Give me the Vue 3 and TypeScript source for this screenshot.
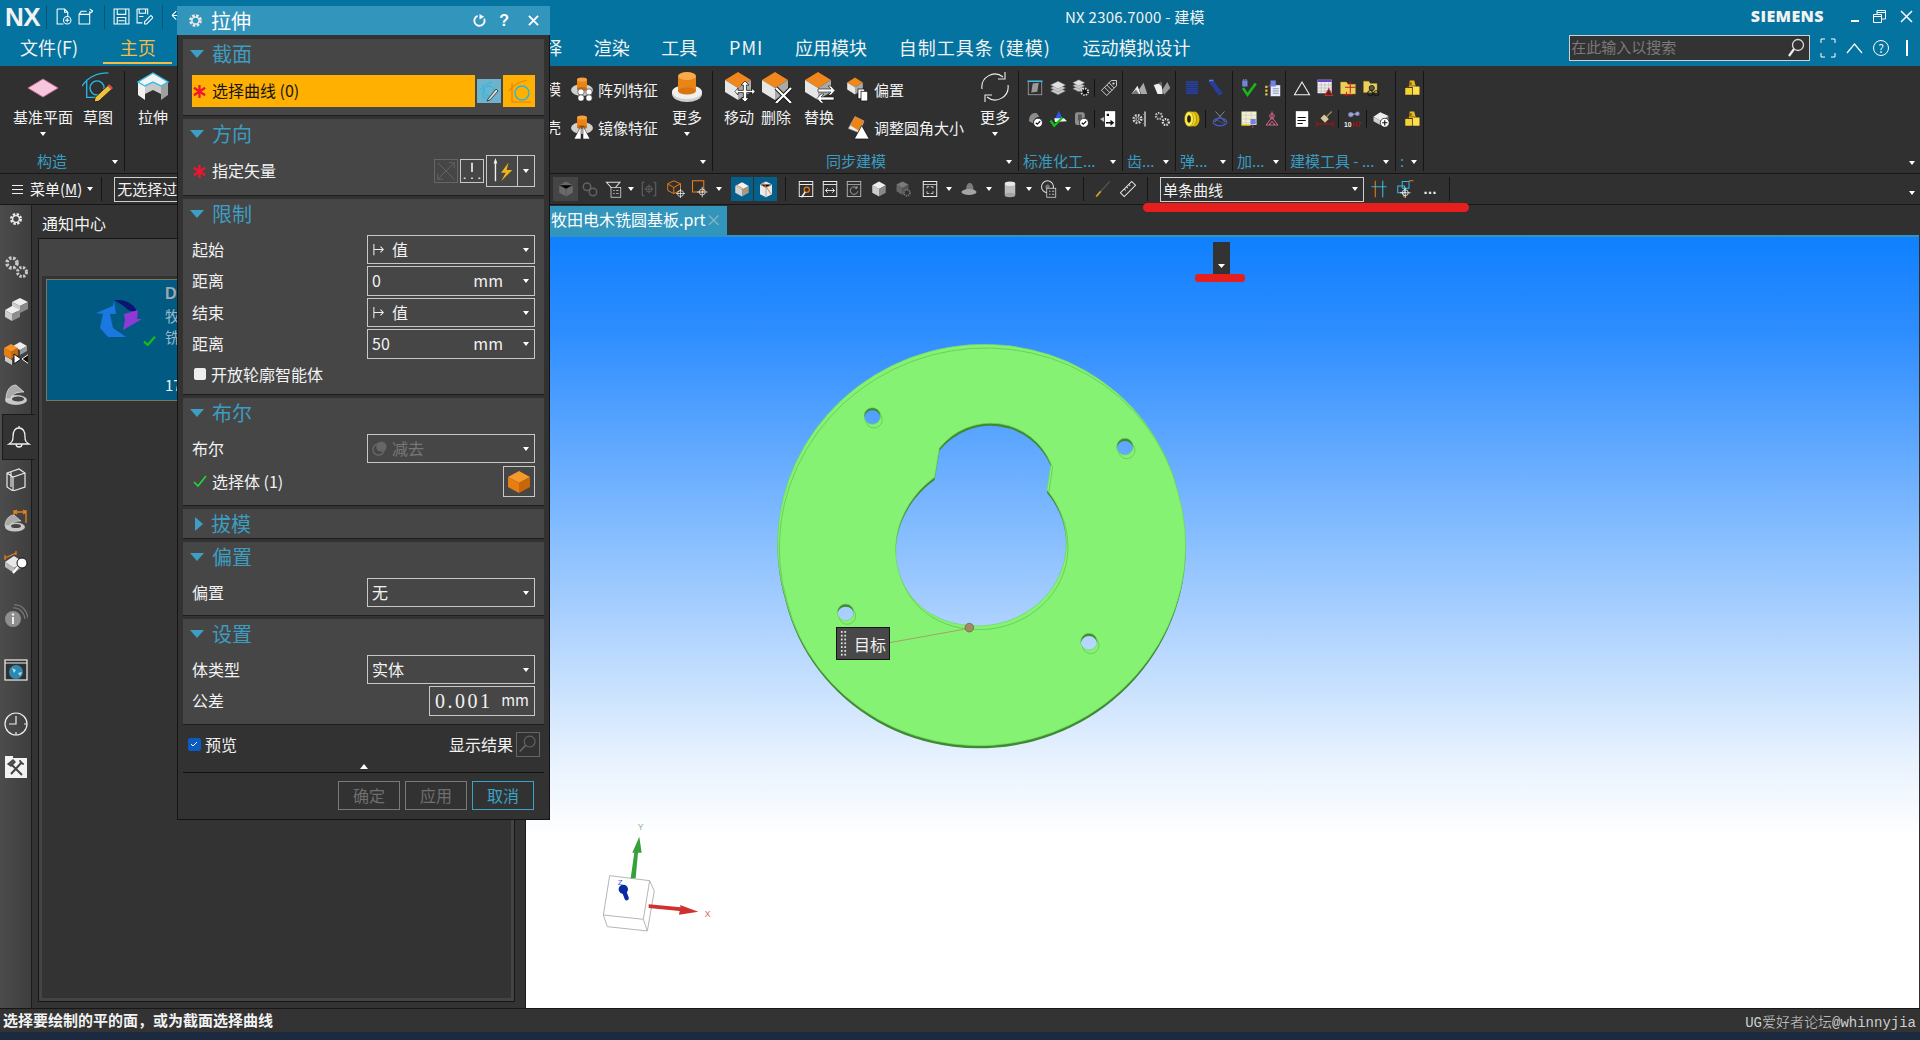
<script setup lang="ts">
type Cell = { i?: string; w: number; hi?: boolean; hg?: boolean; dd?: boolean; sep?: boolean }

const tabs = ['选择', '渲染', '工具', 'PMI', '应用模块']

const smallGroups = [
  { label: '标准化工...', width: 104, rows: [['lasso', 'layers', 'layersgear', '|', 'tag'], ['shellok', 'greenok', 'cylok', '|', 'docarrow']] },
  { label: '齿...', width: 53, rows: [['shards', 'shards2'], ['gearbar', 'gears']] },
  { label: '弹...', width: 57, rows: [['spring', 'spring2'], ['coil', '|', 'scissors']] },
  { label: '加...', width: 53, rows: [['plugok', 'plugdoc'], ['note', 'pinktriad']] },
  { label: '建模工具 - ...', width: 110, rows: [['tri', 'table', 'foldercross', 'folderlink'], ['doc', 'brush', '|', 'h7', '|', 'blockplus']] },
  { label: ':', width: 28, rows: [['gold'], ['gold']] },
]

const toolbar: Cell[] = [
  { i: 'greyblock', w: 25, hg: true }, { i: 'chain', w: 24 }, { i: 'funnel', w: 24 }, { dd: true, w: 10 },
  { i: 'bracket', w: 26 }, { i: 'wirecube', w: 28 }, { i: 'orangesq', w: 20 }, { dd: true, w: 18 },
  { w: 3 }, { i: 'viewcube', w: 22, hi: true }, { w: 1 }, { i: 'viewcube2', w: 23, hi: true }, { w: 8 }, { sep: true, w: 1 },
  { w: 8 }, { i: 'winpin', w: 24 }, { i: 'winarrows', w: 24 }, { i: 'winrefresh', w: 24 }, { i: 'graycube', w: 26 },
  { i: 'gearcube', w: 24 }, { i: 'winexpand', w: 27 }, { dd: true, w: 12 }, { i: 'hat', w: 28 }, { dd: true, w: 12 },
  { i: 'cylgray', w: 30 }, { dd: true, w: 8 }, { i: 'bulbdoc', w: 32 }, { dd: true, w: 6 }, { w: 12 }, { sep: true, w: 1 },
  { w: 7 }, { i: 'pen', w: 24 }, { i: 'ruler', w: 26 }, { w: 6 }, { sep: true, w: 1 }, { w: 12 },
]

const rail = [
  { i: 'railgear', cls: 'h1' }, { i: 'railgears', cls: 'h2' }, { i: 'blocks', cls: 'h2' }, { i: 'orangeblocks', cls: 'h2' },
  { i: 'shell', cls: 'h2' }, { i: 'bell', cls: 'h2 on' }, { i: 'box', cls: 'h2' }, { i: 'shellmark', cls: 'h2' },
  { i: 'blockmag', cls: 'h2' }, { i: 'info', cls: 'h3' }, { i: 'globewin', cls: 'h3' }, { i: 'clock', cls: 'h3' }, { i: 'tools', cls: 'h2' },
]

const circle = (x: number, y: number, r: number) => `M${x - r} ${y}a${r} ${r} 0 1 0 ${2 * r} 0a${r} ${r} 0 1 0 ${-2 * r} 0Z`
const holes: [number, number][] = [[340, 258], [1098, 350], [260, 847], [990, 935]]
const disc =
  'M79 803A610 587 -15 1 1 1257 487A610 587 -15 1 1 79 803Z' +
  'M541 355A195 195 0 0 1 876 402L864 480C905 530 922 585 922 640C922 780 800 888 655 888C510 888 410 790 410 660C410 570 460 490 527 442Z' +
  holes.map(h => circle(h[0], h[1], 25)).join('')
</script>

<template>
  <div class="app">
    <svg class="defs" width="0" height="0">
      <defs>
        <g id="cubeg"><polygon points="15,1 28,9 15,17 2,9" fill="#f0871c" /><polygon points="2,9 15,17 15,29 2,21" fill="#e6e6e6" /><polygon points="28,9 15,17 15,29 28,21" fill="#a9a9a9" /></g>
        <g id="cylg"><ellipse cx="12" cy="13" rx="11" ry="6" fill="#d0d0d0" /><rect x="7" y="2" width="10" height="10" fill="#ea8416" /><ellipse cx="12" cy="12" rx="5" ry="2" fill="#c86c0c" /><ellipse cx="12" cy="2.5" rx="5" ry="2" fill="#f7a13c" /></g>
        <symbol id="plane" viewBox="0 0 32 20"><polygon points="16,1 31,10 16,19 1,10" fill="#f5c6dd" stroke="#c86f98" /></symbol>
        <symbol id="sketch" viewBox="0 0 34 32"><path d="M0 15C6 6 16 1 28 1M5 8V27H17" fill="none" stroke="#25b9e6" stroke-width="1.4" /><circle cx="16" cy="17" r="7.5" fill="none" stroke="#25b9e6" stroke-width="1.5" /><polygon points="29,13 33,17 18,31 13,32 14,27" fill="#eec23c" stroke="#111" stroke-width=".8" /><polygon points="29,13 33,17 31,19 27,15" fill="#d94b4b" /></symbol>
        <symbol id="extrude" viewBox="0 0 32 30"><polygon points="1,10 8,14 8,28 1,23" fill="#f2f2f2" /><polygon points="24,14 31,10 31,23 24,28" fill="#9f9f9f" /><polygon points="8,14 16,10 24,14 24,22 16,18 8,22" fill="#c9c9c9" /><polygon points="16,1 31,10 24,14 16,10 8,14 1,10" fill="#f4f4f4" stroke="#35c0e8" stroke-width="1.4" /></symbol>
        <symbol id="arrayf" viewBox="0 0 24 24"><use href="#cylg" /><g fill="#fff" stroke="#222" stroke-width=".6"><circle cx="11" cy="15" r="3.2" /><circle cx="19" cy="15" r="3.2" /><circle cx="11" cy="21" r="3.2" /><circle cx="19" cy="21" r="3.2" /></g></symbol>
        <symbol id="mirrorf" viewBox="0 0 24 24"><use href="#cylg" /><polygon points="11,11 11,24 4,24" fill="#fff" stroke="#111" stroke-width=".5" /><polygon points="13,11 13,24 20,24" fill="#fff" stroke="#111" stroke-width=".5" /></symbol>
        <symbol id="cylbig" viewBox="0 0 32 32"><ellipse cx="16" cy="23" rx="15" ry="8" fill="#cfcfcf" /><ellipse cx="16" cy="21" rx="15" ry="7" fill="#f0f0f0" /><rect x="7" y="5" width="18" height="15" fill="#ea8416" /><ellipse cx="16" cy="20" rx="9" ry="3.5" fill="#d77510" /><ellipse cx="16" cy="5" rx="9" ry="4" fill="#f8aa48" /></symbol>
        <symbol id="move" viewBox="0 0 32 32"><use href="#cubeg" /><path d="M23 12l4 4h-2.600v5.400H30V19l3 3.500-3 3.500v-2.400h-5.400V29H27l-4 4-4-4h2.400v-5.400H16V26l-3-3.500 3-3.500v2.400h5.400V16H19z" fill="#fff" stroke="#111" stroke-width=".7" transform="translate(-1 -2)" /></symbol>
        <symbol id="del" viewBox="0 0 32 32"><use href="#cubeg" /><path d="M16 17L31 32M31 17L16 32" stroke="#111" stroke-width="4" /><path d="M16 17L31 32M31 17L16 32" stroke="#fff" stroke-width="2.200" /></symbol>
        <symbol id="replace" viewBox="0 0 32 32"><use href="#cubeg" /><path d="M15 18H28l-3-3h3l4 4.500-4 4.500h-3l3-3H15ZM31 26H18l3-3h-3l-4 4.500 4 4.500h3l-3-3H31Z" fill="#fff" stroke="#111" stroke-width=".6" /></symbol>
        <symbol id="offset" viewBox="0 0 32 32"><g transform="scale(.8)"><use href="#cubeg" /></g><rect x="16" y="16" width="9" height="13" fill="#fff" stroke="#111" /><rect x="20" y="19" width="9" height="13" fill="#fff" stroke="#111" /></symbol>
        <symbol id="resize" viewBox="0 0 32 32"><polygon points="12,2 24,8 18,24 3,18" fill="#eee" stroke="#888" /><polygon points="12,2 24,8 17,21 6,14" fill="#ed8418" /><polygon points="21,14 31,32 11,32" fill="#fff" stroke="#111" /></symbol>
        <symbol id="refresh" viewBox="0 0 32 32"><path d="M3 18A13 13 0 0 1 24 6M29 14A13 13 0 0 1 8 26" fill="none" stroke="#eee" stroke-width="1.100" /><path d="M26 1V8H19M6 31V24H13" fill="none" stroke="#eee" stroke-width="1.100" /></symbol>

        <symbol id="lasso" viewBox="0 0 24 24"><rect x="3" y="3" width="18" height="18" fill="none" stroke="#aaa" /><path d="M2 3H22" stroke="#35c0e8" stroke-width="2" /><polygon points="9,6 17,5 15,17 7,18" fill="#9a9a9a" /></symbol>
        <symbol id="layers" viewBox="0 0 24 24"><g fill="#c9c9c9" stroke="#777" stroke-width=".5"><polygon points="12,11 22,16 12,21 2,16" /><polygon points="12,7 22,12 12,17 2,12" /><polygon points="12,3 22,8 12,13 2,8" fill="#e0e0e0" /></g></symbol>
        <symbol id="layersgear" viewBox="0 0 24 24"><g fill="#c9c9c9" stroke="#777" stroke-width=".5"><polygon points="9,9 17,13 9,17 1,13" /><polygon points="9,5 17,9 9,13 1,9" /><polygon points="9,1 17,5 9,9 1,5" fill="#e0e0e0" /></g><circle cx="17" cy="17" r="4.500" fill="#111" stroke="#ddd" stroke-width="2.500" stroke-dasharray="2 1.500" /></symbol>
        <symbol id="tag" viewBox="0 0 24 24"><path d="M15 2H22V9L9 22 2 15ZM12 5L19 12M9 8L16 15M6 11L13 18" fill="none" stroke="#eee" stroke-width="1.100" /><circle cx="18" cy="6" r="1.400" fill="#eee" /></symbol>
        <symbol id="shellok" viewBox="0 0 24 24"><path d="M4 15C4 7 8 3 14 4L18 9 C12 10 9 13 10 18Z" fill="#8d8d8d" /><circle cx="16" cy="17" r="6" fill="#fff" stroke="#111" /><path d="M13 17l2 2 4-4" fill="none" stroke="#111" stroke-width="1.500" /></symbol>
        <symbol id="greenok" viewBox="0 0 24 24"><polygon points="13,1 18,11 8,12" fill="#2d55e6" /><polygon points="7,11 20,11 24,15 8,16" fill="#f2f2f2" /><path d="M2 14l5 7L18 10" fill="none" stroke="#14c014" stroke-width="3" /></symbol>
        <symbol id="cylok" viewBox="0 0 24 24"><rect x="4" y="3" width="13" height="17" rx="3" fill="#8d8d8d" /><rect x="8" y="6" width="5" height="8" fill="#555" /><circle cx="16" cy="17" r="6" fill="#fff" stroke="#111" /><path d="M13 17l2 2 4-4" fill="none" stroke="#111" stroke-width="1.500" /></symbol>
        <symbol id="docarrow" viewBox="0 0 24 24"><path d="M0 12L8 8V18Z" fill="#bbb" /><rect x="6" y="1" width="15" height="22" fill="#fff" stroke="#111" /><path d="M9 5h3v3h-3zM15 5h3M8 16H14V13l5 4-5 4V18H8Z" fill="#111" /></symbol>
        <symbol id="shards" viewBox="0 0 24 24"><polygon points="2,20 10,9 14,20" fill="#eee" /><polygon points="12,14 18,5 23,20 15,20" fill="#aaa" /><polygon points="2,20 8,14 12,20" fill="#777" /></symbol>
        <symbol id="shards2" viewBox="0 0 24 24"><polygon points="1,8 11,5 13,20 6,20" fill="#f0f0f0" /><polygon points="12,15 19,4 23,12 15,21" fill="#999" /><polygon points="7,6 11,3 12,10" fill="#666" /></symbol>
        <symbol id="gearbar" viewBox="0 0 24 24"><circle cx="10" cy="12" r="5" fill="none" stroke="#ccc" stroke-width="3.500" stroke-dasharray="2.300 1.600" /><circle cx="10" cy="12" r="2" fill="none" stroke="#ddd" /><path d="M20 2V22" stroke="#ccc" stroke-width="2" /><path d="M17 6h3M17 12h3M17 18h3" stroke="#888" /></symbol>
        <symbol id="gears" viewBox="0 0 24 24"><circle cx="8" cy="8" r="4" fill="none" stroke="#bbb" stroke-width="3" stroke-dasharray="2 1.400" /><circle cx="17" cy="16" r="4" fill="none" stroke="#ddd" stroke-width="3" stroke-dasharray="2 1.400" /></symbol>
        <symbol id="spring" viewBox="0 0 24 24"><g stroke="#2e49ad" stroke-width="2"><path d="M4 4h16M4 7h16M4 10h16M4 13h16M4 16h16M4 19h16" /></g><rect x="4" y="3" width="16" height="18" fill="#1e318a" opacity=".35" /></symbol>
        <symbol id="spring2" viewBox="0 0 24 24"><path d="M6 2l14 19" stroke="#2742b8" stroke-width="6" stroke-dasharray="2 .6" /><path d="M4 2h6" stroke="#5a78ee" stroke-width="2" /></symbol>
        <symbol id="coil" viewBox="0 0 24 24"><ellipse cx="15" cy="12" rx="7" ry="10" fill="#d9b500" /><ellipse cx="11" cy="12" rx="7" ry="10" fill="#f1d61f" stroke="#6e5b00" stroke-width=".6" /><ellipse cx="8" cy="12" rx="6" ry="10" fill="#ffe94a" stroke="#6e5b00" stroke-width=".6" /><ellipse cx="8" cy="12" rx="2.500" ry="5" fill="#222" /></symbol>
        <symbol id="scissors" viewBox="0 0 24 24"><path d="M6 2l13 14M18 2L5 16" stroke="#888" stroke-width="1.300" /><ellipse cx="12" cy="16" rx="9" ry="5" fill="none" stroke="#4356b8" stroke-width="1.800" /><path d="M4 12l16 7" stroke="#4356b8" /></symbol>
        <symbol id="plugok" viewBox="0 0 24 24"><rect x="3" y="2" width="7" height="8" fill="#6f86e0" /><path d="M5 0v2M8 0v2" stroke="#aab8f0" /><path d="M4 12l6 9L21 6" fill="none" stroke="#18b818" stroke-width="3.500" /></symbol>
        <symbol id="plugdoc" viewBox="0 0 24 24"><rect x="10" y="8" width="13" height="15" fill="#e8ecff" stroke="#556" stroke-width=".6" /><path d="M13 13h8M13 16h8M13 19h8" stroke="#778" /><rect x="10" y="2" width="7" height="8" fill="#6f86e0" /><path d="M3 9h3v3H3zM3 14h3v3H3zM3 19h3v3H3z" fill="#e2c640" /><path d="M6 11l5-4" stroke="#c040c0" /></symbol>
        <symbol id="note" viewBox="0 0 24 24"><rect x="2" y="2" width="20" height="18" fill="#f3eecf" /><path d="M2 7h20M2 12h20M2 17h20M8 2v18M15 2v18" stroke="#bbb" stroke-width=".6" /><rect x="14" y="12" width="7" height="7" fill="#6f86e0" /><path d="M2 20h12" stroke="#e8d020" stroke-width="2" /><path d="M17 19v5" stroke="#c040c0" /></symbol>
        <symbol id="pinktriad" viewBox="0 0 24 24"><path d="M12 10L4 20M12 10L20 20M12 2V13M4 20H20M12 15L8 20M12 15L16 20" fill="none" stroke="#d86a8c" stroke-width="1.300" /><circle cx="12" cy="8" r="3" fill="none" stroke="#d86a8c" stroke-width="1.300" /></symbol>
        <symbol id="tri" viewBox="0 0 24 24"><polygon points="12,4 22,21 2,21" fill="none" stroke="#f4f4f4" stroke-width="1.400" /></symbol>
        <symbol id="table" viewBox="0 0 24 24"><rect x="2" y="1" width="19" height="18" fill="#eee" /><rect x="2" y="1" width="19" height="3" fill="#6a44c8" /><path d="M2 8h19M2 12h19M2 16h19M7 4v15M12 4v15M17 4v15" stroke="#999" stroke-width=".6" /><polygon points="17,13 22,22 12,22" fill="#333" stroke="#d82020" stroke-width="1.400" /></symbol>
        <symbol id="foldercross" viewBox="0 0 24 24"><path d="M2 4H10L12 7H22V20H2Z" fill="#ecd05a" stroke="#a88a20" stroke-width=".6" /><path d="M15 3v16M8 11h14M6 21h12M10 17v6" stroke="#d01818" stroke-width="1.300" /></symbol>
        <symbol id="folderlink" viewBox="0 0 24 24"><path d="M2 3H9L11 6H20V18H2Z" fill="#ecd05a" stroke="#a88a20" stroke-width=".6" /><circle cx="13" cy="12" r="3.500" fill="#555" stroke="#111" /><circle cx="11" cy="19" r="3.500" fill="none" stroke="#111" stroke-width="1.300" /><circle cx="19" cy="19" r="3.500" fill="none" stroke="#111" stroke-width="1.300" /></symbol>
        <symbol id="doc" viewBox="0 0 24 24"><rect x="3" y="1" width="18" height="22" fill="#fff" stroke="#111" /><path d="M6 10h11M6 14h11M6 18h7" stroke="#111" stroke-width="1.500" /></symbol>
        <symbol id="brush" viewBox="0 0 24 24"><path d="M21 2L14 9" stroke="#9a8a50" stroke-width="2" /><polygon points="11,6 17,12 12,17 6,11" fill="#d8c898" /><path d="M1 15v7M23 15v7M1 18.500H23" stroke="#a01414" stroke-width="1.500" /></symbol>
        <symbol id="h7" viewBox="0 0 24 24"><circle cx="9" cy="6" r="3.500" fill="#8a9ad8" stroke="#444" stroke-width=".5" /><circle cx="18" cy="5" r="3" fill="#8a9ad8" stroke="#444" stroke-width=".5" /><path d="M9 6L18 5" stroke="#ccc" /><text x="0" y="22" font-size="9" font-weight="700" fill="#eee" font-family="Liberation Sans">10</text><text x="11" y="22" font-size="9" font-weight="700" fill="#a81010" font-family="Liberation Sans">H7</text></symbol>
        <symbol id="blockplus" viewBox="0 0 24 24"><polygon points="11,3 22,8 13,15 2,9" fill="#eee" /><polygon points="2,9 13,15 13,21 2,15" fill="#d0d0d0" /><polygon points="22,8 13,15 13,21 22,14" fill="#888" /><circle cx="17" cy="17" r="6" fill="#fff" stroke="#111" /><path d="M13.500 17h7M17 13.500v7" stroke="#111" stroke-width="1.500" /></symbol>
        <symbol id="gold" viewBox="0 0 24 24"><polygon points="9,2 15,2 17,10 8,11" fill="#e8b820" /><rect x="3" y="12" width="9" height="9" fill="#f6d233" /><rect x="13" y="10" width="9" height="11" fill="#ffe04a" /><path d="M5 12l3-3h9" stroke="#8a6a10" fill="none" /><circle cx="10" cy="6" r="2" fill="#8a6a10" /></symbol>

        <symbol id="cubeflat" viewBox="0 0 24 24"><polygon points="12,2 21,7 12,12 3,7" fill="#eee" /><polygon points="3,7 12,12 12,22 3,17" fill="#ccc" /><polygon points="21,7 12,12 12,22 21,17" fill="#888" /></symbol>
        <symbol id="greyblock" viewBox="0 0 24 24"><polygon points="12,2 21,7 21,17 12,22 3,17 3,7" fill="#6a6a6a" /><path d="M3 7l9 5 9-5M12 12v10" stroke="#505050" /></symbol>
        <symbol id="chain" viewBox="0 0 24 24"><circle cx="8" cy="9" r="5" fill="none" stroke="#616161" stroke-width="2" /><circle cx="16" cy="16" r="5" fill="none" stroke="#616161" stroke-width="2" /></symbol>
        <symbol id="funnel" viewBox="0 0 24 24"><path d="M2 3H20L13 11V13H9V11Z" fill="none" stroke="#ddd" stroke-width="1.400" /><rect x="8" y="10" width="13" height="13" fill="#303030" stroke="#ddd" /><path d="M11 14h2M15 14h3M11 18h2M15 18h3" stroke="#ddd" /></symbol>
        <symbol id="bracket" viewBox="0 0 24 24"><path d="M6 3H3V21H6M18 3H21V21H18" fill="none" stroke="#686868" stroke-width="1.300" /><circle cx="12" cy="12" r="4" fill="none" stroke="#686868" /><path d="M12 6V18M6 12H18" stroke="#686868" /></symbol>
        <symbol id="wirecube" viewBox="0 0 24 24"><path d="M9 1L18 5V14L9 18 1 14V5ZM1 5L9 10 18 5M9 10V18" fill="none" stroke="#ef7d12" stroke-width="1.300" /><circle cx="18" cy="18" r="4" fill="none" stroke="#eee" /><path d="M18 12v12M12 18h12" stroke="#eee" /></symbol>
        <symbol id="orangesq" viewBox="0 0 24 24"><rect x="2" y="1" width="15" height="15" fill="none" stroke="#ef7d12" stroke-width="1.400" /><circle cx="15" cy="16" r="4" fill="none" stroke="#eee" /><path d="M15 9v14M8 16h14" stroke="#eee" /></symbol>
        <symbol id="viewcube" viewBox="0 0 24 24"><polygon points="12,3 21,8 12,13 3,8" fill="#f3f3f3" /><polygon points="3,8 12,13 12,22 3,17" fill="#d5d5d5" /><polygon points="21,8 12,13 12,22 21,17" fill="#9b9b9b" /><path d="M5 7L20 16" stroke="#ef7d12" stroke-width="1.300" /></symbol>
        <symbol id="viewcube2" viewBox="0 0 24 24"><polygon points="12,2 20,6 20,19 12,23 4,19 4,6" fill="#e9e9e9" /><path d="M4 6l8 4 8-4M12 10v13" stroke="#999" /><path d="M8 3L19 19" stroke="#ef7d12" stroke-width="1.300" /></symbol>
        <symbol id="winpin" viewBox="0 0 24 24"><rect x="3" y="2" width="18" height="20" fill="none" stroke="#eee" stroke-width="1.300" /><path d="M3 6H21" stroke="#eee" stroke-width="1.300" /><circle cx="13" cy="13" r="3.500" fill="none" stroke="#ef7d12" stroke-width="1.500" /><path d="M11 16L6 23" stroke="#eee" stroke-width="2" /></symbol>
        <symbol id="winarrows" viewBox="0 0 24 24"><rect x="3" y="2" width="18" height="20" fill="none" stroke="#eee" stroke-width="1.300" /><path d="M3 6H21M6 14H18M6 14l3-3M6 14l3 3M18 14l-3-3M18 14l-3 3" fill="none" stroke="#eee" stroke-width="1.200" /></symbol>
        <symbol id="winrefresh" viewBox="0 0 24 24"><rect x="3" y="2" width="18" height="20" fill="none" stroke="#bbb" stroke-width="1.200" /><path d="M3 6H21" stroke="#bbb" /><path d="M16 11A5 5 0 1 0 17 15M16 8v3h-3" fill="none" stroke="#bbb" /></symbol>
        <symbol id="graycube" viewBox="0 0 24 24"><use href="#cubeflat" /></symbol>
        <symbol id="gearcube" viewBox="0 0 24 24"><polygon points="10,2 18,6 10,11 2,6" fill="#7a7a7a" /><polygon points="2,6 10,11 10,20 2,15" fill="#666" /><polygon points="18,6 10,11 10,20 18,15" fill="#555" /><circle cx="16" cy="17" r="4" fill="#303030" stroke="#777" stroke-width="2.400" stroke-dasharray="1.800 1.200" /></symbol>
        <symbol id="winexpand" viewBox="0 0 24 24"><rect x="3" y="2" width="18" height="20" fill="none" stroke="#eee" stroke-width="1.300" /><path d="M3 6H21M8 11V9H11M13 9H16V11M16 15V18H13M11 18H8V15" fill="none" stroke="#eee" /></symbol>
        <symbol id="hat" viewBox="0 0 24 24"><path d="M8 14C8 6 11 4 13 4S18 6 18 14Z" fill="#7c7c7c" /><ellipse cx="12" cy="16" rx="10" ry="4" fill="#a5a5a5" /></symbol>
        <symbol id="cylgray" viewBox="0 0 24 24"><rect x="5" y="5" width="14" height="15" fill="#bdbdbd" /><ellipse cx="12" cy="20" rx="7" ry="3" fill="#a5a5a5" /><ellipse cx="12" cy="5" rx="7" ry="3" fill="#e8e8e8" /></symbol>
        <symbol id="bulbdoc" viewBox="0 0 24 24"><circle cx="10" cy="9" r="8" fill="none" stroke="#ddd" stroke-width="1.400" /><circle cx="10" cy="9" r="3" fill="#777" /><rect x="9" y="11" width="12" height="12" fill="#303030" stroke="#ddd" /><path d="M12 15h2M16 15h3M12 19h2M16 19h3" stroke="#ddd" /></symbol>
        <symbol id="pen" viewBox="0 0 24 24"><path d="M21 2L9 15" stroke="#555" stroke-width="1.500" /><path d="M9 15L3 22" stroke="#d5a32c" stroke-width="2.400" /></symbol>
        <symbol id="ruler" viewBox="0 0 24 24"><path d="M17 2L22 7 7 22 2 17ZM13 6l2 2M10 9l2 2M7 12l2 2" fill="none" stroke="#eee" stroke-width="1.400" /></symbol>
        <symbol id="parallel" viewBox="0 0 24 24"><path d="M7 1V23" stroke="#e8801c" stroke-width="1.400" /><path d="M17 1V23" stroke="#35c0e8" stroke-width="1.400" /><path d="M2 9H22" stroke="#35c0e8" stroke-width="1.200" /></symbol>
        <symbol id="bluecross" viewBox="0 0 24 24"><rect x="1" y="8" width="9" height="9" fill="none" stroke="#35c0e8" stroke-width="1.300" /><rect x="7" y="2" width="9" height="9" fill="none" stroke="#35c0e8" stroke-width="1.300" /><path d="M16 1h6M9 16v7" stroke="#e8801c" stroke-width="1.300" /><circle cx="11" cy="17" r="4" fill="none" stroke="#fff" /><path d="M11 10v14M4 17h14" stroke="#fff" /></symbol>

        <symbol id="railgear" viewBox="0 0 24 24"><circle cx="12" cy="12" r="7" fill="none" stroke="#e8e8e8" stroke-width="4" stroke-dasharray="3.500 2" /><circle cx="12" cy="12" r="5" fill="none" stroke="#e8e8e8" stroke-width="2" /></symbol>
        <symbol id="railgears" viewBox="0 0 24 24"><circle cx="8" cy="8" r="5" fill="none" stroke="#c8c8c8" stroke-width="3.500" stroke-dasharray="2.500 1.500" /><circle cx="18" cy="17" r="4.500" fill="none" stroke="#c8c8c8" stroke-width="3" stroke-dasharray="2.200 1.400" /></symbol>
        <symbol id="blocks" viewBox="0 0 24 24"><polygon points="16,1 24,5 16,9 8,5" fill="#eee" /><polygon points="8,5 16,9 16,16 8,12" fill="#ccc" /><polygon points="24,5 16,9 16,16 24,12" fill="#888" /><polygon points="8,9 16,13 8,17 1,13" fill="#eee" /><polygon points="1,13 8,17 8,24 1,20" fill="#ccc" /><polygon points="16,13 8,17 8,24 16,20" fill="#8d8d8d" /></symbol>
        <symbol id="orangeblocks" viewBox="0 0 24 24"><polygon points="16,1 23,5 16,9 9,5" fill="#eee" /><polygon points="23,5 16,9 16,14 23,10" fill="#999" /><polygon points="7,3 14,7 7,11 0,7" fill="#f59328" /><polygon points="0,7 7,11 7,18 0,14" fill="#e67e14" /><polygon points="14,7 7,11 7,18 14,14" fill="#c96a0c" /><polygon points="1,15 8,19 8,24 1,20" fill="#ccc" /><polygon points="10,13 17,18 10,23" fill="#fff" stroke="#111" /><polygon points="25,13 18,18 25,23" fill="#111" stroke="#fff" /></symbol>
        <symbol id="shell" viewBox="0 0 24 24"><ellipse cx="12" cy="17" rx="11" ry="5" fill="#c7c7c7" /><ellipse cx="14" cy="16" rx="6" ry="2.500" fill="#444" /><path d="M2 16C2 8 6 2 12 2L20 9C13 9 7 11 7 16Z" fill="#a9a9a9" stroke="#e8e8e8" stroke-width=".7" /></symbol>
        <symbol id="bell" viewBox="0 0 24 24"><path d="M12 3C7 3 6 8 6 12S5 17 2 19H22C19 17 18 16 18 12S17 3 12 3ZM12 3V1M9 19C9 23 15 23 15 19" fill="none" stroke="#f0f0f0" stroke-width="1.300" /></symbol>
        <symbol id="box" viewBox="0 0 24 24"><path d="M3 6L15 2 21 6V20L9 24 3 20ZM3 6L9 10 21 6M9 10V24M7 5V20" fill="none" stroke="#e8e8e8" stroke-width="1.200" /></symbol>
        <symbol id="shellmark" viewBox="0 0 24 24"><ellipse cx="11" cy="18" rx="10" ry="4.500" fill="#c7c7c7" /><ellipse cx="12" cy="17" rx="5" ry="2" fill="#444" /><path d="M1 17C1 11 5 6 10 6L17 12C12 12 7 13 6 17Z" fill="#a9a9a9" stroke="#e8e8e8" stroke-width=".6" /><path d="M10 6V1M22 14V1M10 3H22M10 3l3-2M10 3l3 2M22 3l-3-2M22 3l-3 2" fill="none" stroke="#e8801c" stroke-width="1.300" /></symbol>
        <symbol id="blockmag" viewBox="0 0 24 24"><polygon points="10,5 19,11 10,17 1,11" fill="#e8e8e8" /><polygon points="1,11 10,17 10,22 1,16" fill="#bbb" /><polygon points="19,11 10,17 10,22 19,16" fill="#888" /><path d="M1 7L12 2M1 4v5M12 0v4" stroke="#e8801c" fill="none" stroke-width="1.200" /><circle cx="18" cy="12" r="5" fill="#fff" stroke="#111" /><path d="M14 16l-5 6" stroke="#fff" stroke-width="2.200" /></symbol>
        <symbol id="info" viewBox="0 0 24 24"><circle cx="9" cy="15" r="8" fill="#8e8e8e" /><rect x="8" y="13" width="2" height="7" fill="#eee" /><circle cx="9" cy="10.500" r="1.200" fill="#eee" /><path d="M9 4C15 3 20 8 21 15M10 1C18 0 23 7 24 14" fill="none" stroke="#777" stroke-width="1.200" /></symbol>
        <symbol id="globewin" viewBox="0 0 24 24"><rect x="1" y="2" width="22" height="20" fill="#303030" stroke="#eee" stroke-width="1.200" /><path d="M1 5H23" stroke="#eee" /><circle cx="12" cy="14" r="7" fill="#2c8ab0" /><path d="M8 10l4 2-2 3zM14 15l4-1-2 4z" fill="#b7dbe8" /></symbol>
        <symbol id="clock" viewBox="0 0 24 24"><circle cx="12" cy="12" r="11" fill="none" stroke="#eee" stroke-width="1.200" /><path d="M12 4V12H5M12 20V23M20 12H23" fill="none" stroke="#eee" stroke-width="1.200" /></symbol>
        <symbol id="tools" viewBox="0 0 24 24"><rect x="1" y="3" width="22" height="20" fill="#f2f2f2" /><rect x="1" y="1" width="8" height="3" fill="#f2f2f2" /><path d="M7 9L18 20M18 7L7 19" stroke="#444" stroke-width="2" /><path d="M4 9L9 5 11 7 7 11ZM16 5A3.500 3.500 0 0 0 20 9" stroke="#444" stroke-width="1.400" fill="#555" /></symbol>
        <symbol id="star" viewBox="0 0 16 16"><path d="M8 1V15M2 4L14 12M14 4L2 12" stroke="#f0152d" stroke-width="2.400" /></symbol>
        <symbol id="valueicon" viewBox="0 0 16 16"><path d="M2 2V14M2 8H12M9 5l3 3-3 3" fill="none" stroke="#eee" stroke-width="1.100" /></symbol>
      </defs>
    </svg>

    <header class="titlebar">
      <div class="top">
        <div class="qa">
          <span class="nx">NX</span>
          <i class="vbar"></i>
          <svg class="qi" viewBox="0 0 16 16"><path d="M2 1H9L12 4V8M2 1V15H8M9 1V4H12" fill="none" stroke="#fff" /><circle cx="11.500" cy="11.500" r="3.500" fill="none" stroke="#fff" /><path d="M9.500 11.500h4M11.500 9.500v4" stroke="#fff" /></svg>
          <svg class="qi" viewBox="0 0 16 16"><path d="M1 6H11V15H1ZM1 6L3 3H8M11 6V3M11 1l3 2M11 5l3-2" fill="none" stroke="#fff" /></svg>
          <i class="vbar"></i>
          <svg class="qi" viewBox="0 0 16 16"><path d="M1 1H15V15H1ZM4 1V6H12V1M4 9H12V15H4ZM5 12H11" fill="none" stroke="#fff" /></svg>
          <svg class="qi" viewBox="0 0 16 16"><path d="M1 1H11V6M1 1V14H6M3 1V5H9V1M3 8H7" fill="none" stroke="#fff" /><path d="M8 13L14 7 16 9 10 15H8Z" fill="none" stroke="#fff" /></svg>
          <i class="vbar"></i>
          <svg class="qi" viewBox="0 0 16 16"><path d="M1 7L5 3M1 7L5 11M1 7H11A4 4 0 0 1 11 15H9" fill="none" stroke="#fff" /></svg>
        </div>
        <div class="apptitle">NX 2306.7000 - 建模</div>
        <div class="brand">SIEMENS</div>
        <div class="winctl">
          <i class="wmin"></i>
          <svg viewBox="0 0 13 13" width="13" height="13"><path d="M.5 4.500H8.500V12.500H.5ZM4 4.500V.5H12.500V9H8.500M.5 6.500H8.500M4 2.500H12.500" fill="none" stroke="#fff" /></svg>
          <svg viewBox="0 0 13 13" width="13" height="13"><path d="M1 1L12 12M12 1L1 12" stroke="#fff" stroke-width="1.500" /></svg>
        </div>
      </div>
      <div class="menus">
        <span class="menu first">文件(F)</span>
        <span class="menu active">主页</span>
        <i class="menu-gap"></i>
        <span v-for="t in tabs" :key="t" class="menu" :class="{ pmi: t === 'PMI' }">{{ t }}</span>
        <span class="menu wide">自制工具条 (建模)</span>
        <span class="menu">运动模拟设计</span>
        <div class="search">
          <span>在此输入以搜索</span>
          <svg viewBox="0 0 18 20" width="18" height="20"><circle cx="11" cy="7" r="5.500" fill="none" stroke="#ddd" stroke-width="1.300" /><path d="M7 11L2 18" stroke="#eee" stroke-width="2.200" /></svg>
        </div>
        <div class="helpers">
          <svg viewBox="0 0 16 20" width="16" height="20"><path d="M1 5V1H5M11 1H15V5M15 15V19H11M5 19H1V15" fill="none" stroke="#fff" /></svg>
          <svg viewBox="0 0 17 12" width="17" height="12"><path d="M1 11L8.500 2 16 11" fill="none" stroke="#fff" stroke-width="1.200" /></svg>
          <span class="help">?</span>
          <i class="bang"></i>
        </div>
      </div>
    </header>

    <section class="ribbon">
      <div class="group g-build">
        <div class="body bigs">
          <div class="big plane"><svg class="planei"><use href="#plane" /></svg><span>基准平面</span><b class="dd"></b></div>
          <div class="big"><svg class="b32"><use href="#sketch" /></svg><span>草图</span></div>
        </div>
        <div class="foot"><span>构造</span><b class="dd"></b></div>
      </div>
      <div class="group g-feature">
        <div class="body bigs">
          <div class="big"><svg class="b32"><use href="#extrude" /></svg><span>拉伸</span></div>
          <div class="pairs">
            <div class="cutoff"><span>拔模</span><span>抽壳</span></div>
            <div class="pair-col">
              <div class="pair"><svg class="s24"><use href="#arrayf" /></svg><span>阵列特征</span></div>
              <div class="pair"><svg class="s24"><use href="#mirrorf" /></svg><span>镜像特征</span></div>
            </div>
          </div>
          <div class="big more"><svg class="b32"><use href="#cylbig" /></svg><span>更多</span><b class="dd"></b></div>
        </div>
        <div class="foot"><span></span><b class="dd"></b></div>
      </div>
      <div class="group g-sync">
        <div class="body bigs">
          <div class="big sync"><svg class="b32"><use href="#move" /></svg><span>移动</span></div>
          <div class="big sync"><svg class="b32"><use href="#del" /></svg><span>删除</span></div>
          <div class="big sync swap"><svg class="b32"><use href="#replace" /></svg><span>替换</span></div>
          <div class="pair-col offs">
            <div class="pair"><svg class="s28"><use href="#offset" /></svg><span>偏置</span></div>
            <div class="pair"><svg class="s28"><use href="#resize" /></svg><span>调整圆角大小</span></div>
          </div>
          <div class="big more2"><svg class="b32"><use href="#refresh" /></svg><span>更多</span><b class="dd"></b></div>
        </div>
        <div class="foot center"><span>同步建模</span><b class="dd"></b></div>
      </div>
      <div v-for="g in smallGroups" :key="g.label" class="group small" :style="{ width: g.width + 'px' }">
        <div class="body">
          <div v-for="(row, n) in g.rows" :key="n" class="srow">
            <template v-for="(name, k) in row" :key="k">
              <i v-if="name === '|'" class="ssep"></i>
              <svg v-else class="si"><use :href="'#' + name" /></svg>
            </template>
          </div>
        </div>
        <div class="foot"><span>{{ g.label }}</span><b class="dd"></b></div>
      </div>
      <div class="ribbon-end"><b class="dd"></b></div>
    </section>

    <section class="toolbar">
      <div class="tb-left">
        <span class="burger"></span>
        <span class="menubtn">菜单(<u>M</u>)</span>
        <b class="dd"></b>
        <i class="tsep"></i>
        <div class="filter">无选择过</div>
      </div>
      <div v-for="(c, n) in toolbar" :key="n" class="cell" :class="{ hi: c.hi, hg: c.hg }" :style="{ width: c.w + 'px' }">
        <svg v-if="c.i" class="ti"><use :href="'#' + c.i" /></svg>
        <b v-else-if="c.dd" class="dd"></b>
        <i v-else-if="c.sep" class="tsep"></i>
      </div>
      <div class="curve"><span>单条曲线</span><b class="dd"></b></div>
      <div class="cell w30"><svg class="ti"><use href="#parallel" /></svg></div>
      <div class="cell w24"><svg class="ti"><use href="#bluecross" /></svg></div>
      <div class="cell w24 dots">…</div>
      <i class="tsep after"></i>
      <b class="dd far"></b>
      <i class="redline"></i>
    </section>

    <main class="main">
      <nav class="rail">
        <div v-for="r in rail" :key="r.i" class="rail-item" :class="r.cls"><svg class="ri"><use :href="'#' + r.i" /></svg></div>
      </nav>
      <aside class="panel">
        <div class="panel-title">通知中心</div>
        <div class="panel-box">
          <div class="panel-strip"></div>
          <div class="panel-inner">
            <div class="card">
              <svg class="syncicon" viewBox="0 0 46 38"><polygon points="0,13 17,6 18,0 20,14 14,14 17,28 30,37 12,37 4,28 7,14" fill="#1a78e0" /><path d="M18 0C28 -1 38 3 42 13L32 10C28 5 24 4 18 0Z" fill="#0c1470" /><polygon points="28,14 42,10 41,19 46,19 27,30 29,20" fill="#8f3ad6" /></svg>
              <svg class="okicon" viewBox="0 0 14 12"><path d="M1 7L5 11 13 2" fill="none" stroke="#12c012" stroke-width="2.400" /></svg>
              <div class="card-text">
                <b>D</b>
                <p>牧<br />铣</p>
                <em>17</em>
              </div>
            </div>
          </div>
        </div>
      </aside>
      <div class="canvas-col">
        <div class="filetabs"><div class="filetab"><span>牧田电木铣圆基板.prt</span><i>×</i></div></div>
        <div class="viewport">
          <svg class="scene" viewBox="527 237 1392 771" width="1392" height="771">
            <defs><clipPath id="discclip"><path :d="disc" clip-rule="evenodd" /></clipPath></defs>
            <rect x="1214" y="242" width="17" height="32" fill="#333" />
            <polygon points="1219,264 1226,264 1222.500,268" fill="#fff" />
            <rect x="1196" y="274" width="50" height="8" rx="3" fill="#e51e1e" />
            <g transform="translate(760 330) scale(.3333)">
              <path :d="disc" fill="#3f8a30" fill-rule="evenodd" transform="translate(0 8)" />
              <path :d="disc" fill="#85f274" fill-rule="evenodd" stroke="#6cd85d" stroke-width="2" />
              <g clip-path="url(#discclip)" fill="none" stroke="#66c958" stroke-width="2.500">
                <path :d="disc" transform="translate(5 11)" />
              </g>
              <path d="M392 938L620 897" stroke="#b08a66" stroke-width="2.400" />
              <circle cx="631" cy="893" r="13" fill="#a08c62" stroke="#6b5c3c" stroke-width="2" />
            </g>
            <g transform="translate(580 810) scale(.3333)">
              <path d="M92 197L212 212 193 328 73 315ZM212 212L226 243 205 363 193 328M73 315L85 350 205 363" fill="#fff" stroke="#b5b5b5" stroke-width="3" />
              <polygon points="155,205 170,205 177,128 188,128 181,80 160,128 166,128" fill="#36a03a" />
              <polygon points="209,283 305,292 303,285 358,305 300,314 302,303 209,294" fill="#cf3030" />
              <path d="M133 238L143 265" stroke="#0a2aa0" stroke-width="13" stroke-linecap="round" />
              <circle cx="133" cy="238" r="14" fill="#0a2aa0" />
              <text x="176" y="60" font-size="26" fill="#86b886" font-family="Liberation Sans">Y</text>
              <text x="377" y="322" font-size="26" fill="#e06060" font-family="Liberation Sans">X</text>
              <text x="116" y="226" font-size="24" fill="#3a50e0" font-family="Liberation Sans">Z</text>
            </g>
          </svg>
          <div class="target"><i class="grip"></i><span>目标</span></div>
        </div>
      </div>
    </main>

    <footer class="status">
      <span class="hint">选择要绘制的平的面，或为截面选择曲线</span>
      <span class="mark">UG爱好者论坛@whinnyjia</span>
    </footer>
    <div class="desk"></div>

    <div class="dialog">
      <div class="dlg-title">
        <svg class="dlg-gear" viewBox="0 0 24 24"><use href="#railgear" /></svg>
        <span>拉伸</span>
        <svg class="dlg-btn reset" viewBox="0 0 14 14"><path d="M5 2A5.500 5.500 0 1 0 12 5" fill="none" stroke="#fff" stroke-width="2" /><polygon points="7,0 12,3 7,6" fill="#fff" /></svg>
        <b class="q">?</b>
        <svg class="dlg-btn" viewBox="0 0 12 12"><path d="M1 1L11 11M11 1L1 11" stroke="#fff" stroke-width="2" /></svg>
      </div>

      <div class="sect">
        <div class="sect-head"><i class="tri"></i>截面</div>
        <div class="row req">
          <div class="pick"><svg class="star"><use href="#star" /></svg><span>选择曲线 (0)</span></div>
          <svg class="sk-a" viewBox="0 0 24 24"><path d="M3 11C6 7 9 5 15 3M6 6V19H14" fill="none" stroke="#25b9e6" /><circle cx="12" cy="12" r="5" fill="none" stroke="#25b9e6" /><path d="M19 10L11 20 10 22 13 21 21 12Z" fill="#ddd" stroke="#111" stroke-width=".7" /></svg>
          <svg class="sk-b" viewBox="0 0 32 32"><path d="M6 16C10 10 16 7 24 5M9 8V27H28" fill="none" stroke="#e8801c" stroke-width="1.200" /><circle cx="19" cy="18" r="7" fill="none" stroke="#28b8d8" stroke-width="1.400" /></svg>
        </div>
      </div>

      <div class="sect">
        <div class="sect-head"><i class="tri"></i>方向</div>
        <div class="row req">
          <svg class="star"><use href="#star" /></svg><span class="lab">指定矢量</span>
          <div class="vecs">
            <div class="vb dim"><svg viewBox="0 0 24 24" width="22" height="22"><path d="M3 21L21 3M3 3L21 21M15 3H21V9M3 15V21H9" fill="none" stroke="#666" /></svg></div>
            <div class="vb"><svg viewBox="0 0 24 24" width="22" height="22"><path d="M12 3V13" stroke="#ddd" stroke-width="2" /><path d="M3 20h2M11 20h2M19 20h2" stroke="#ddd" stroke-width="1.600" /></svg></div>
            <div class="vb wide">
              <svg viewBox="0 0 30 30" width="30" height="28"><path d="M8 4V26" stroke="#eee" stroke-width="1.500" /><polygon points="8,1 10,7 6,7" fill="#eee" /><path d="M22 6L14 17H19L14 26 26 14H20Z" fill="#f0b416" /></svg>
              <span class="vdd"><b class="dd"></b></span>
            </div>
          </div>
        </div>
      </div>

      <div class="sect">
        <div class="sect-head"><i class="tri"></i>限制</div>
        <div class="frow first"><span>起始</span><div class="sel"><svg class="vi"><use href="#valueicon" /></svg><em>值</em><b class="dd"></b></div></div>
        <div class="frow tall"><span>距离</span><div class="sel num"><em>0</em><u>mm</u><b class="dd"></b></div></div>
        <div class="frow"><span>结束</span><div class="sel"><svg class="vi"><use href="#valueicon" /></svg><em>值</em><b class="dd"></b></div></div>
        <div class="frow tall"><span>距离</span><div class="sel num"><em>50</em><u>mm</u><b class="dd"></b></div></div>
        <label class="chk"><i></i>开放轮廓智能体</label>
      </div>

      <div class="sect">
        <div class="sect-head"><i class="tri"></i>布尔</div>
        <div class="frow first"><span>布尔</span><div class="sel off"><svg class="vi" viewBox="0 0 16 16"><circle cx="7" cy="9" r="6" fill="none" stroke="#666" stroke-width="1.500" /><circle cx="10" cy="6" r="5.500" fill="#666" /></svg><em>减去</em><b class="dd"></b></div></div>
        <div class="frow body-row">
          <span class="ok"><svg viewBox="0 0 14 12" width="14" height="12"><path d="M1 7L5 11 13 1" fill="none" stroke="#25d83a" stroke-width="1.600" /></svg>选择体 (1)</span>
          <div class="pickbody"><svg viewBox="0 0 24 24" width="24" height="24"><polygon points="12,1 23,7 12,13 1,7" fill="#f59a2a" /><polygon points="1,7 12,13 12,23 1,17" fill="#e67e14" /><polygon points="23,7 12,13 12,23 23,17" fill="#c9660a" /></svg></div>
        </div>
      </div>

      <div class="sect closed">
        <div class="sect-head"><i class="tri side"></i>拔模</div>
      </div>

      <div class="sect">
        <div class="sect-head"><i class="tri"></i>偏置</div>
        <div class="frow first"><span>偏置</span><div class="sel plain"><em>无</em><b class="dd"></b></div></div>
      </div>

      <div class="sect last">
        <div class="sect-head"><i class="tri"></i>设置</div>
        <div class="frow first"><span>体类型</span><div class="sel plain"><em>实体</em><b class="dd"></b></div></div>
        <div class="frow tol"><span>公差</span><div class="tolbox"><em>0.001</em><u>mm</u></div></div>
      </div>

      <div class="dlg-foot">
        <div class="preview">
          <i class="cbx"><svg viewBox="0 0 12 12" width="12" height="12"><path d="M3 6L5 8 9 4" fill="none" stroke="#fff" /></svg></i>
          <span>预览</span>
          <span class="res">显示结果</span>
          <div class="resbtn"><svg viewBox="0 0 24 24" width="20" height="20"><circle cx="14" cy="9" r="6.500" fill="none" stroke="#666" stroke-width="1.300" /><path d="M9 14L2 21" stroke="#666" stroke-width="2" /></svg></div>
        </div>
        <div class="collapse"><i></i></div>
        <div class="actions">
          <button class="act">确定</button>
          <button class="act">应用</button>
          <button class="act cancel">取消</button>
        </div>
      </div>
    </div>
  </div>
</template>

<style scoped>
.app {
  position: relative;
  width: 1920px;
  height: 1040px;
  overflow: hidden;
  display: flex;
  flex-direction: column;
  background: #303030;
  color: #f2f2f2;
  font-family: "Noto Sans CJK SC", "Open Sans", sans-serif;
  font-size: 16px;
}
* { box-sizing: border-box; }
i, em, u { font-style: normal; text-decoration: none; }
svg { display: block; flex: none; }
.defs { position: absolute; }

.dd {
  display: inline-block;
  width: 0;
  height: 0;
  border-left: 3.500px solid transparent;
  border-right: 3.500px solid transparent;
  border-top: 4px solid #fff;
  flex: none;
}

/* title */
.titlebar { height: 66px; background: #04739f; flex: none; }
.top { height: 33px; display: flex; align-items: center; }
.qa { width: 1065px; display: flex; align-items: center; padding-left: 5px; }
.nx { font: 700 26px/30px "Liberation Sans", sans-serif; width: 38px; letter-spacing: -.5px; }
.vbar { width: 1px; height: 24px; background: #0a5474; margin: 0 8px 0 3px; }
.qi { width: 17px; height: 17px; margin-right: 6px; }
.apptitle { font-size: 15px; line-height: 33px; letter-spacing: .25px; }
.brand { margin-left: auto; margin-right: 27px; font: 800 16px/33px "Open Sans", sans-serif; letter-spacing: .4px; }
.winctl { display: flex; align-items: center; gap: 14px; padding-right: 7px; }
.wmin { width: 8px; height: 2px; background: #fff; margin-top: 9px; }
.menus { height: 33px; display: flex; align-items: flex-start; padding-left: 20px; gap: 31.700px; }
.menu { position: relative; font-size: 18px; line-height: 29px; white-space: nowrap; }
.menu-gap { width: 306.800px; flex: none; }
.menu.first { margin-right: 10px; }
.menu.wide { margin-right: 0; letter-spacing: 1px; }
.menu.pmi { letter-spacing: 1px; }
.menu.active { color: #f5bd42; }
.menu.active::after {
  content: "";
  position: absolute;
  left: -17px;
  right: -16px;
  bottom: -2px;
  height: 2px;
  background: #f5bd42;
}
.search {
  margin-left: auto;
  margin-top: 2px;
  width: 241px;
  height: 26px;
  border: 1px solid #cfcfcf;
  background: #333;
  color: #7a7a7a;
  display: flex;
  align-items: center;
  justify-content: space-between;
  font-size: 15px;
  line-height: 20px;
  padding: 0 4px 3px 1px;
}
.search svg { margin-top: 3px; }
.helpers { display: flex; align-items: center; gap: 10px; width: 110px; height: 29px; padding-left: 10px; margin-left: -32px; }
.help {
  width: 16px;
  height: 16px;
  border: 1px solid #fff;
  border-radius: 50%;
  font-size: 12px;
  line-height: 14px;
  text-align: center;
}
.bang { width: 2px; height: 16px; background: #fff; margin-left: 7px; border-bottom: 3px solid #fff; }

/* ribbon */
.ribbon { height: 108px; display: flex; flex: none; border-bottom: 1px solid #171717; background: #303030; padding-top: 5px; }
.group { height: 100px; border-right: 1px solid #151515; display: flex; flex-direction: column; flex: none; }
.body { height: 80px; flex: none; }
.bigs { display: flex; }
.foot {
  height: 20px;
  display: flex;
  justify-content: space-between;
  align-items: center;
  color: #3a9cc0;
  font-size: 15px;
  line-height: 20px;
  padding: 0 6px 0 4px;
  white-space: nowrap;
}
.foot .dd { margin-top: 2px; }
.foot.center { padding-left: 113px; }
.g-build { width: 125px; }
.g-build .bigs { padding-left: 13px; gap: 9px; }
.g-build .foot { padding-left: 37px; }
.g-feature { width: 588px; }
.g-feature .bigs { padding-left: 12px; }
.g-sync { width: 306px; }
.g-sync .bigs { padding-left: 10px; }
.big {
  display: flex;
  flex-direction: column;
  align-items: center;
  width: 32px;
  font-size: 15px;
  line-height: 20px;
  white-space: nowrap;
}
.big.plane { width: 60px; }
.big .dd { margin-top: 5px; }
.b32 { width: 32px; height: 32px; margin-bottom: 4px; }
.planei { width: 32px; height: 20px; margin: 7px 0 9px; }
.pairs { display: flex; margin-left: auto; gap: 9px; margin-right: 13px; }
.cutoff { display: flex; flex-direction: column; font-size: 15px; line-height: 20px; gap: 18px; padding-top: 8px; }
.pair-col { display: flex; flex-direction: column; gap: 6px; padding-top: 2px; }
.pair { display: flex; align-items: center; gap: 4px; height: 32px; font-size: 15px; white-space: nowrap; }
.s24 { width: 24px; height: 24px; }
.s28 { width: 24px; height: 26px; }
.more { margin-right: 9px; }
.sync { margin-right: 5px; }
.swap { margin-left: 6px; margin-right: 11px; }
.offs { gap: 6px; }
.more2 { margin-left: auto; margin-right: 7px; }
.small .body { padding: 1px 0 0 4px; }
.srow { display: flex; align-items: center; height: 31px; }
.si { width: 18px; height: 18px; margin: 0 2.500px; }
.ssep { width: 1px; height: 18px; background: #111; margin: 0 2px; flex: none; }
.ribbon-end { margin-left: auto; display: flex; align-items: flex-end; padding: 0 5px 6px 0; height: 100px; }

/* toolbar */
.toolbar { position: relative; height: 31px; display: flex; align-items: center; flex: none; background: #303030; border-bottom: 1px solid #171717; }
.tb-left { width: 553px; display: flex; align-items: center; padding-left: 12px; flex: none; }
.burger { width: 11px; height: 9px; border-top: 1px solid #eee; border-bottom: 1px solid #eee; position: relative; }
.burger::after { content: ""; position: absolute; left: 0; right: 0; top: 3px; height: 1px; background: #eee; }
.menubtn { margin-left: 7px; font-size: 15px; line-height: 24px; margin-right: 5px; }
.menubtn u { text-decoration: underline; }
.tsep { display: block; width: 1px; height: 24px; background: #151515; flex: none; }
.tb-left .tsep { margin: 0 12px 0 8px; }
.filter { width: 200px; height: 25px; border: 1px solid #cfcfcf; font-size: 15px; line-height: 22px; padding-left: 2px; }
.cell { display: flex; align-items: center; justify-content: center; height: 24px; flex: none; }
.cell.hi { background: #04608a; }
.cell.hg { background: #454545; }
.ti { width: 18px; height: 18px; }
.w30 { width: 30px; }
.w24 { width: 24px; }
.dots { font: 700 14px/24px "Liberation Sans", sans-serif; }
.curve {
  width: 204px;
  height: 25px;
  border: 1px solid #cfcfcf;
  display: flex;
  align-items: center;
  justify-content: space-between;
  font-size: 15px;
  padding: 0 5px 0 2px;
  flex: none;
}
.after { margin-left: 7px; }
.far { margin-left: auto; margin-right: 5px; margin-top: 8px; }
.redline {
  position: absolute;
  left: 1143px;
  top: 29px;
  width: 326px;
  height: 9px;
  border-radius: 5px;
  background: #e51e1e;
  z-index: 3;
}

/* main */
.main { flex: 1; min-height: 0; display: flex; background: #303030; }
.rail {
  width: 32px;
  flex: none;
  display: flex;
  flex-direction: column;
  background: linear-gradient(90deg, #4c4c4c, #3e3e3e);
  border-right: 1px solid #1b1b1b;
}
.rail-item { display: flex; align-items: center; justify-content: center; flex: none; }
.rail-item.h1 { height: 28px; margin-bottom: 13px; }
.rail-item.h1 .ri { width: 16px; height: 16px; }
.rail-item.h2 { height: 42px; }
.rail-item.h3 { height: 54px; }
.rail-item:nth-child(4) { margin-top: 2px; }
.rail-item:nth-child(10) { margin-top: 5px; }
.rail-item:nth-child(13) { margin-top: -5px; }
.rail-item.on { background: #333; width: 33px; border: 1px solid #1b1b1b; border-right: none; margin-left: 2px; height: 46px; margin-top: -2px; margin-bottom: -2px; z-index: 1; }
.ri { width: 24px; height: 24px; }
.panel { width: 494px; flex: none; display: flex; flex-direction: column; padding: 0 10px 6px 6px; background: #333; border-right: 1px solid #1b1b1b; }
.panel-title { height: 33px; line-height: 36px; font-size: 16px; padding-left: 4px; flex: none; }
.panel-box { flex: 1; min-height: 0; border: 1px solid #171717; background: #444; display: flex; flex-direction: column; padding: 0 3px 3px; }
.panel-strip { height: 37px; flex: none; }
.panel-inner { flex: 1; min-height: 0; background: #333; padding: 3px 4px; }
.card {
  position: relative;
  height: 122px;
  background: #005a82;
  border: 1px solid #7a7660;
  display: flex;
  padding-left: 118px;
}
.syncicon { position: absolute; left: 49px; top: 20px; width: 46px; height: 38px; }
.okicon { position: absolute; left: 96px; top: 55px; width: 13px; height: 11px; }
.card-text { font-size: 15px; line-height: 21px; color: #9cb6c4; padding-top: 2px; }
.card-text b { display: block; font: 700 16px/23px "Liberation Sans", sans-serif; color: #a0a8ae; }
.card-text p { margin: 0; }
.card-text em { display: block; color: #f0f0f0; margin-top: 27px; }
.canvas-col { flex: 1; min-width: 0; display: flex; flex-direction: column; padding-right: 1px; margin-left: 0; }
.filetabs { height: 32px; flex: none; border-bottom: 2px solid #3295bb; padding-top: 1px; }
.filetab {
  margin-left: 23px;
  width: 178px;
  height: 29px;
  background: #3295bb;
  color: #fff;
  font-size: 16px;
  line-height: 27px;
  display: flex;
  justify-content: space-between;
  padding: 0 6px 0 2px;
  white-space: nowrap;
}
.filetab i { color: #8fb8c9; }
.viewport {
  position: relative;
  flex: 1;
  min-height: 0;
  background: linear-gradient(180deg, #0f80ff 0, #2d8dff 93px, #e8f2fe 523px, #fff 600px);
}
.scene { position: absolute; left: 0; top: 0; }
.target {
  position: absolute;
  left: 310px;
  top: 390px;
  width: 54px;
  height: 33px;
  background: #484848;
  border: 1px solid #151515;
  display: flex;
  align-items: center;
  gap: 7px;
  padding-left: 3px;
  font-size: 16px;
  color: #f0f0f0;
}
.grip {
  width: 7px;
  height: 27px;
  background-image: radial-gradient(circle, #ddd 1.100px, transparent 1.300px);
  background-size: 3.500px 3.800px;
  flex: none;
}

/* status */
.status {
  height: 24px;
  flex: none;
  border-top: 1px solid #171717;
  background: #333;
  display: flex;
  justify-content: space-between;
  padding: 0 4px 0 3px;
  line-height: 22px;
}
.hint { font-size: 15px; font-weight: 700; }
.mark { font: 300 14px/28px "Liberation Mono", "Noto Sans CJK SC", monospace; color: #cfcfcf; }
.desk { height: 8px; flex: none; background: #1b2a3f; }

/* dialog */
.dialog {
  position: absolute;
  left: 177px;
  top: 6px;
  width: 373px;
  height: 814px;
  background: #323232;
  border: 1px solid #141414;
  border-top: none;
  padding: 0 5px;
  z-index: 5;
}
.dlg-title {
  height: 29px;
  margin: 0 -6px 4px;
  background: #3295bb;
  display: flex;
  align-items: center;
  padding: 0 11px 0 10px;
  font-size: 20px;
  color: #fff;
}
.dlg-gear { width: 17px; height: 17px; margin-right: 7px; }
.dlg-title span { flex: 1; }
.dlg-btn { width: 11px; height: 11px; }
.reset { width: 13px; height: 13px; }
.q { font: 700 16px/20px "Liberation Sans", sans-serif; margin: 0 19px 0 13px; }
.sect { background: #464646; border-bottom: 1px solid #1e1e1e; margin-bottom: 3px; padding-bottom: 8px; }
.sect.closed { padding-bottom: 0; height: 30px; }
.sect.last { margin-bottom: 0; border-bottom: 1px solid #1e1e1e; }
.sect-head {
  height: 30px;
  display: flex;
  align-items: center;
  gap: 8px;
  padding-left: 7px;
  color: #3d9dc0;
  font-size: 20px;
  line-height: 30px;
}
.tri { width: 0; height: 0; border-left: 7.500px solid transparent; border-right: 7.500px solid transparent; border-top: 8px solid #3d9fc4; flex: none; }
.tri.side { border: none; border-top: 7.500px solid transparent; border-bottom: 7.500px solid transparent; border-left: 8px solid #3d9fc4; margin: 0 0 0 5px; }
.row.req { display: flex; align-items: center; height: 32px; margin-top: 6px; padding: 0 9px; }
.star { width: 15px; height: 15px; }
.pick {
  width: 283px;
  height: 32px;
  background: #ffb000;
  display: flex;
  align-items: center;
  gap: 5px;
  color: #151515;
  flex: none;
}
.pick span, .lab { padding-bottom: 2px; }
.sk-a { width: 24px; height: 24px; background: #6db3cc; margin-left: 2px; }
.sk-b { width: 32px; height: 32px; background: #ffb000; margin-left: 2px; }
.lab { margin-left: 5px; }
.vecs { margin-left: auto; display: flex; align-items: center; gap: 2px; }
.vb { width: 24px; height: 24px; border: 1px solid #c8c8c8; display: flex; align-items: center; justify-content: center; }
.vb.dim { border-color: #666; }
.vb.wide { width: 49px; height: 32px; justify-content: flex-start; }
.vdd { width: 17px; height: 30px; border-left: 1px solid #c8c8c8; display: flex; align-items: center; justify-content: center; margin-left: auto; }
.frow { display: flex; align-items: center; justify-content: space-between; padding: 0 9px; height: 29px; font-size: 16px; line-height: 22px; }
.frow > span { padding-bottom: 2px; }
.frow.first { margin-top: 6px; }
.frow.tall { height: 30px; }
.frow:not(.first):not(.tol):not(.body-row) { margin-top: 2px; }
.sel {
  width: 168px;
  height: 100%;
  border: 1px solid #c8c8c8;
  display: flex;
  align-items: center;
  padding: 0 5px 0 4px;
  gap: 5px;
}
.sel em, .sel u { padding-bottom: 2px; }
.sel .dd { margin-left: auto; }
.vi { width: 15px; height: 15px; }
.sel.num u { margin-left: auto; }
.sel.num .dd { margin-left: 15px; }
.sel.off { color: #777; }
.ok { display: flex; align-items: center; gap: 5px; padding-left: 1px; }
.body-row { margin-top: 3px; height: 31px; }
.pickbody { width: 32px; height: 31px; border: 1px solid #c8c8c8; display: flex; align-items: center; justify-content: center; }
.chk { display: flex; align-items: center; gap: 5px; height: 24px; margin-top: 3px; padding-left: 11px; font-size: 16px; line-height: 22px; }
.chk i { width: 12px; height: 12px; background: #eee; border-radius: 2px; }
.tol { margin-top: 2px; height: 30px; }
.tolbox { width: 106px; height: 30px; border: 1px solid #c8c8c8; display: flex; align-items: center; justify-content: space-between; padding: 0 5px; }
.tolbox em { font: 20px/26px "Liberation Serif", serif; letter-spacing: 2.500px; }
.tolbox u { font-size: 15px; line-height: 20px; padding-bottom: 2px; }
.preview { height: 38px; display: flex; align-items: center; padding: 0 4px 0 5px; font-size: 16px; line-height: 22px; }
.cbx { width: 13px; height: 13px; background: #0a5cc0; border-radius: 2px; margin-right: 4px; }
.res { margin-left: auto; margin-right: 3px; }
.resbtn { width: 24px; height: 25px; border: 1px solid #666; display: flex; align-items: center; justify-content: center; }
.collapse { height: 10px; display: flex; align-items: flex-end; justify-content: center; padding-bottom: 3px; border-bottom: 1px solid #111; }
.collapse i { width: 0; height: 0; border-left: 4.500px solid transparent; border-right: 4.500px solid transparent; border-bottom: 5px solid #fff; }
.actions { display: flex; justify-content: flex-end; gap: 5px; padding: 8px 10px 0 0; }
.act {
  width: 62px;
  height: 29px;
  background: transparent;
  border: 1px solid #7a7a7a;
  color: #6f6f6f;
  font: 16px/25px "Noto Sans CJK SC", sans-serif;
  padding: 0;
}
.act.cancel { border-color: #3aa3c8; color: #3aa3c8; }
</style>

<style>
html, body { margin: 0; background: #303030; }
</style>
